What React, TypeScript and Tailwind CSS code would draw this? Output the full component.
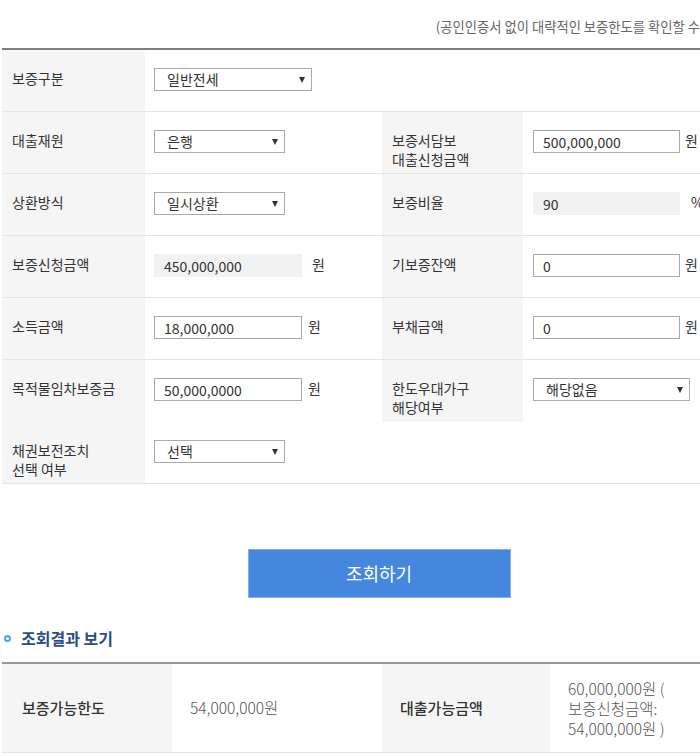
import React from "react";

type Field =
  | { kind: "select"; value: string; w: string }
  | { kind: "input"; value: string; w: string; unit?: string; readOnly?: boolean; gap: string };

interface Cell {
  label: React.ReactNode;
  field?: Field;
}

const rows: { left: Cell; right?: Cell; border: boolean }[] = [
  { left: { label: "보증구분", field: { kind: "select", value: "일반전세", w: "w-[158px]" } }, border: true },
  {
    left: { label: "대출재원", field: { kind: "select", value: "은행", w: "w-[131px]" } },
    right: {
      label: (
        <>
          보증서담보
          <br />
          대출신청금액
        </>
      ),
      field: { kind: "input", value: "500,000,000", w: "w-[147px]", unit: "원", gap: "ml-[5px]" },
    },
    border: true,
  },
  {
    left: { label: "상환방식", field: { kind: "select", value: "일시상환", w: "w-[131px]" } },
    right: {
      label: "보증비율",
      field: { kind: "input", value: "90", w: "w-[147px]", unit: "%", readOnly: true, gap: "ml-[11px]" },
    },
    border: true,
  },
  {
    left: {
      label: "보증신청금액",
      field: { kind: "input", value: "450,000,000", w: "w-[148px]", unit: "원", readOnly: true, gap: "ml-[10px]" },
    },
    right: {
      label: "기보증잔액",
      field: { kind: "input", value: "0", w: "w-[147px]", unit: "원", gap: "ml-[5px]" },
    },
    border: true,
  },
  {
    left: {
      label: "소득금액",
      field: { kind: "input", value: "18,000,000", w: "w-[148px]", unit: "원", gap: "ml-[6px]" },
    },
    right: {
      label: "부채금액",
      field: { kind: "input", value: "0", w: "w-[147px]", unit: "원", gap: "ml-[5px]" },
    },
    border: true,
  },
  {
    left: {
      label: "목적물임차보증금",
      field: { kind: "input", value: "50,000,0000", w: "w-[148px]", unit: "원", gap: "ml-[6px]" },
    },
    right: {
      label: (
        <>
          한도우대가구
          <br />
          해당여부
        </>
      ),
      field: { kind: "select", value: "해당없음", w: "w-[157px]" },
    },
    border: false,
  },
  {
    left: {
      label: (
        <>
          채권보전조치
          <br />
          선택 여부
        </>
      ),
      field: { kind: "select", value: "선택", w: "w-[131px]" },
    },
    border: true,
  },
];

function Control({ field }: { field: Field }) {
  if (field.kind === "select") {
    return (
      <div
        className={`relative h-[23px] ${field.w} border border-[#a9a9a9] bg-white pl-[12px] text-[14px] leading-[21px] text-[#333]`}
      >
        {field.value}
        <svg
          className="absolute right-[6px] top-[8px]"
          width="6"
          height="6"
          viewBox="0 0 6 6"
        >
          <polygon points="0,0 6,0 3,6" fill="#333" />
        </svg>
      </div>
    );
  }
  return (
    <div className="flex items-start">
      <input
        readOnly
        value={field.value}
        className={`h-[23px] ${field.w} border px-[9px] text-[14px] leading-[21px] text-[#333] outline-none ${
          field.readOnly ? "border-[#f2f2f2] bg-[#f2f2f2]" : "border-[#a9a9a9] bg-white"
        }`}
      />
      {field.unit && (
        <span className={`${field.gap} text-[14px] leading-[20px] text-[#333]`}>{field.unit}</span>
      )}
    </div>
  );
}

function Label({ children, w, white }: { children?: React.ReactNode; w: string; white?: boolean }) {
  return (
    <div
      className={`${w} shrink-0 pl-[10px] pt-[18px] text-[14px] leading-[19px] text-[#333] ${
        white ? "bg-white" : "bg-[#f5f5f5]"
      }`}
    >
      <div className="pt-[1px]">{children}</div>
    </div>
  );
}

export default function App() {
  return (
    <div className="h-[756px] w-[700px] overflow-hidden bg-white font-['Noto_Sans_CJK_KR',sans-serif]">
      <div className="ml-[2px] w-[760px]">
        {/* note */}
        <div className="h-[48px] w-[758px] whitespace-nowrap pt-[18px] text-right text-[13.3px] leading-[18px] text-[#666]">
          (공인인증서 없이 대략적인 보증한도를 확인할 수 있습니다.)
        </div>

        {/* form table */}
        <div className="border-t-2 border-[#7f7f7f]">
          {rows.map((row, i) => (
            <div key={i} className={`flex h-[62px] ${row.border ? "border-b border-[#e5e5e5]" : ""}`}>
              <Label w="w-[143px]">{row.left.label}</Label>
              <div className="w-[237px] shrink-0 pl-[9px] pt-[18px]">
                {row.left.field && <Control field={row.left.field} />}
              </div>
              <Label w="w-[141px]" white={!row.right}>
                {row.right?.label}
              </Label>
              <div className="w-[239px] shrink-0 pl-[10px] pt-[18px]">
                {row.right?.field && <Control field={row.right.field} />}
              </div>
            </div>
          ))}
        </div>

        {/* button */}
        <div className="mt-[65px] flex w-[754px] justify-center">
          <button className="h-[49px] w-[263px] border border-[#82b1ee] bg-[#4587df] text-[18px] text-white">
            조회하기
          </button>
        </div>

        {/* result heading */}
        <div className="mt-[28px] flex h-[24px] items-center gap-[10px]">
          <span className="ml-[2px] h-[7px] w-[7px] rounded-full border-2 border-[#3ea6ee]" />
          <span className="text-[16px] font-bold leading-[24px] text-[#2b4c86]">조회결과 보기</span>
        </div>

        {/* result table */}
        <div className="mt-[12px] flex h-[91px] border-t-2 border-b border-[#999] border-b-[#e5e5e5]">
          <div className="flex w-[170px] shrink-0 items-center bg-[#f5f5f5] pl-[20px] text-[15px] font-medium text-[#333]">
            보증가능한도
          </div>
          <div className="flex w-[210px] shrink-0 items-center pl-[18px] text-[15.5px] font-light text-[#555]">
            54,000,000원
          </div>
          <div className="flex w-[168px] shrink-0 items-center bg-[#f5f5f5] pl-[18px] text-[15px] font-medium text-[#333]">
            대출가능금액
          </div>
          <div className="flex w-[212px] shrink-0 items-center pl-[18px] text-[15.5px] font-light leading-[20px] text-[#555]">
            <div>
              60,000,000원 (
              <br />
              보증신청금액:
              <br />
              54,000,000원 )
            </div>
          </div>
        </div>
      </div>
    </div>
  );
}
